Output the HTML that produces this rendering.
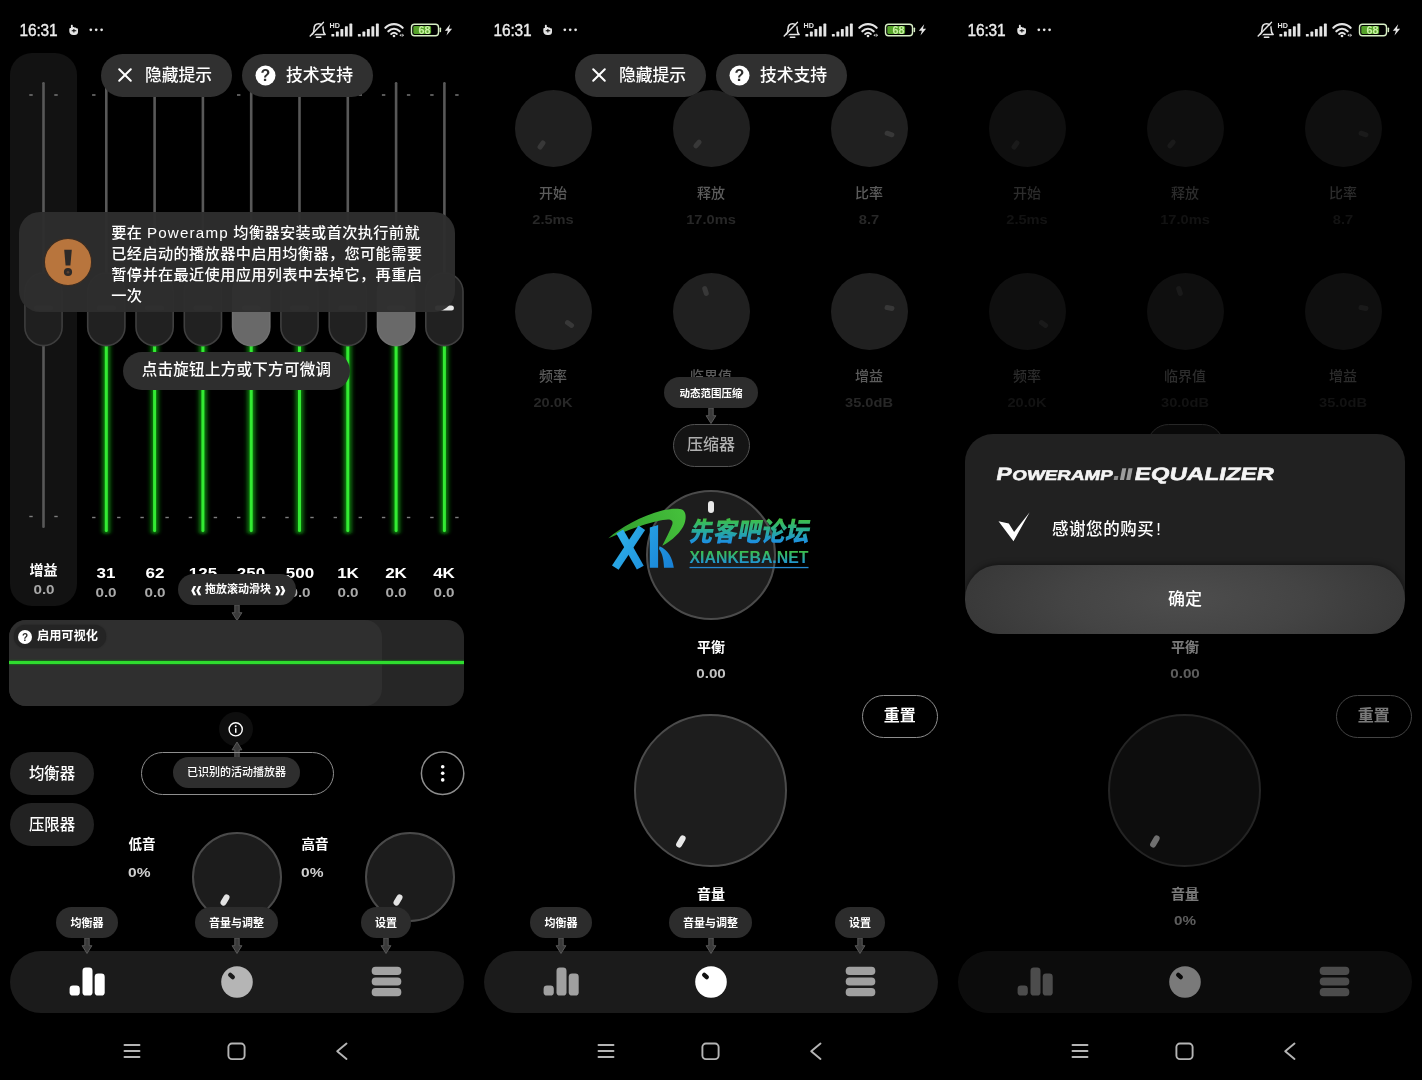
<!DOCTYPE html>
<html lang="zh-CN">
<head>
<meta charset="utf-8">
<title>Poweramp Equalizer</title>
<style>
*{box-sizing:border-box;margin:0;padding:0}
html,body{width:1422px;height:1080px;background:#000;overflow:hidden}
body{font-family:"Liberation Sans","Noto Sans CJK SC",sans-serif;color:#fff;position:relative}
.ph{position:absolute;top:0;width:474px;height:1080px;overflow:hidden;background:#000;opacity:.999}
#p1{left:0}#p2{left:474px}#p3{left:948px}
.abs{position:absolute}
.ctr{position:absolute;transform:translateX(-50%);white-space:nowrap;text-align:center}
.ctr.w{transform:translateX(-50%) scaleX(1.17)}
.wl{transform:scaleX(1.15);transform-origin:0 50%}
/* status bar */
.time{position:absolute;left:19.500px;top:22px;-webkit-text-stroke:.35px #ededed;font-size:15.500px;line-height:18px;color:#ededed;letter-spacing:-.15px;transform:scaleY(1.06);transform-origin:0 50%}
.sb svg{position:absolute;left:0;top:0}
/* pills */
.pill{position:absolute;background:#303030;border-radius:22px;white-space:nowrap;color:#fff;font-weight:500}
.hint{height:43px;top:54px;width:131px;font-size:16.800px;line-height:43px}
.tip{position:absolute;background:#2c2c2c;border-radius:16px;height:30px;line-height:29px;font-size:11px;font-weight:700;text-align:center;color:#fff;white-space:nowrap}
.arrow{position:absolute;width:10px;height:15px}
/* bottom nav */
.bnav{position:absolute;left:10px;top:951px;width:454px;height:62px;border-radius:31px;background:#1b1b1b}
.sys{position:absolute;left:0;top:1036px;width:474px;height:30px}
/* knob */
.knob{position:absolute;border-radius:50%;background:#1b1b1b;border:2px solid #454545}
.lbl{font-weight:500}
.val{color:#a9a9a9;font-weight:700}
</style>
</head>
<body>
<!-- ======================= PANEL 1 ======================= -->
<div class="ph" id="p1">

<div class="sb">
<div class="time">16:31</div>
<svg width="474" height="50" viewBox="0 0 474 50">
<g fill="#e4e4e4">
<!-- hand icon -->
<path d="M69.3 29.2c0-1 .9-1.5 1.6-1.1v-2.3c0-1.300 1.900-1.300 1.900 0v1.500c.5-.7 1.700-.5 1.800.4c.6-.5 1.600-.2 1.700.6c.8-.3 1.700.2 1.700 1.100v2.600c0 1.800-1.300 3-3.200 3h-1.600c-2.100 0-3.900-1.600-3.900-3.700z"/>
<circle cx="90.800" cy="29.800" r="1.350"/><circle cx="96.200" cy="29.800" r="1.350"/><circle cx="101.600" cy="29.800" r="1.350"/>
</g>
<g fill="#000"><rect x="71.600" y="30.300" width="4.800" height="1" rx=".4"/><rect x="73.400" y="29" width="1" height="3.600" rx=".4"/></g>
<!-- mute bell -->
<g fill="none" stroke="#e4e4e4" stroke-width="1.500" stroke-linecap="round" stroke-linejoin="round">
<path d="M312 34.500h13.200c-1.700-1.400-2-2.700-2-5.300c0-3.400-1.700-5.500-4.600-5.500c-2.900 0-4.600 2.100-4.600 5.500c0 2.600-.3 3.900-2 5.300z"/>
<path d="M316.400 37.300h4.400"/>
<path d="M323.400 22.400L310.200 36" stroke-width="1.500"/>
</g>
<path d="M324.600 23.500L311.400 37.100" stroke="#000" stroke-width="1.300" fill="none"/>
<!-- signal -->
<g fill="#e4e4e4"><rect x="331.4" y="34.0" width="2.9" height="2.6" rx="0.6"/><rect x="335.9" y="31.6" width="2.9" height="5.0" rx="0.6"/><rect x="340.4" y="29.0" width="2.9" height="7.6" rx="0.6"/><rect x="344.9" y="26.3" width="2.9" height="10.3" rx="0.6"/><rect x="349.4" y="23.6" width="2.9" height="13.0" rx="0.6"/><rect x="357.9" y="34.0" width="2.9" height="2.6" rx="0.6"/><rect x="362.4" y="31.6" width="2.9" height="5.0" rx="0.6"/><rect x="366.9" y="29.0" width="2.9" height="7.6" rx="0.6"/><rect x="371.4" y="26.3" width="2.9" height="10.3" rx="0.6"/><rect x="375.9" y="23.6" width="2.9" height="13.0" rx="0.6"/></g>
<text x="329.600" y="28.300" font-family="Liberation Sans, sans-serif" font-size="6.400" font-weight="700" fill="#e4e4e4" textLength="10.400" lengthAdjust="spacingAndGlyphs">HD</text>
<!-- wifi -->
<g fill="none" stroke="#e4e4e4" stroke-width="2.250" stroke-linecap="round">
<path d="M385.400 27.800c5-4.800 12.200-4.800 17.200 0"/>
<path d="M388.400 31.200c3.300-3.100 7.900-3.100 11.200 0"/>
<path d="M391.200 34c1.700-1.500 3.900-1.500 5.600 0" stroke-width="1.900"/>
</g>
<circle cx="394" cy="36" r="1.300" fill="#e4e4e4"/>
<path d="M399.400 35.200l2-1.500v3zM402.300 37v-3.500l1.800 1.700z" fill="#cfcfcf"/>
<!-- battery -->
<rect x="411.500" y="24.300" width="27" height="11.400" rx="3" fill="none" stroke="#d8efc6" stroke-width="1.400"/>
<rect x="413.300" y="26.100" width="17.800" height="7.800" rx="1.400" fill="#55a22a"/>
<rect x="439.600" y="27.600" width="1.500" height="4.600" rx=".7" fill="#d8efc6"/>
<text x="418.600" y="33.900" font-family="Liberation Sans, sans-serif" font-size="10.400" font-weight="700" fill="#c9f3a3" textLength="12" lengthAdjust="spacingAndGlyphs">68</text>
<path d="M450.200 24.200l-5.400 6.600h3.100l-1.400 4.700l5.600-6.800h-3.200z" fill="#e4e4e4"/>
</svg>
</div><div class="abs" style="left:10px;top:53px;width:67px;height:553px;border-radius:22px;background:#121212"></div><svg class="abs" style="left:0;top:0" width="474" height="620" viewBox="0 0 474 620"><defs><filter id="glow" x="-400%" y="-5%" width="900%" height="110%"><feGaussianBlur stdDeviation="2.600 1.500"/></filter></defs><g fill="#7e7e7e"><rect x="29.3" y="94.3" width="3.400" height="1.400"/><rect x="54.3" y="94.3" width="3.400" height="1.400"/><rect x="29.3" y="515.8" width="3.400" height="1.400"/><rect x="54.3" y="515.8" width="3.400" height="1.400"/><rect x="92.1" y="94.3" width="3.400" height="1.400"/><rect x="117.1" y="94.3" width="3.400" height="1.400"/><rect x="92.1" y="516.8" width="3.400" height="1.400"/><rect x="117.1" y="516.8" width="3.400" height="1.400"/><rect x="140.4" y="94.3" width="3.400" height="1.400"/><rect x="165.4" y="94.3" width="3.400" height="1.400"/><rect x="140.4" y="516.8" width="3.400" height="1.400"/><rect x="165.4" y="516.8" width="3.400" height="1.400"/><rect x="188.7" y="94.3" width="3.400" height="1.400"/><rect x="213.7" y="94.3" width="3.400" height="1.400"/><rect x="188.7" y="516.8" width="3.400" height="1.400"/><rect x="213.7" y="516.8" width="3.400" height="1.400"/><rect x="237.0" y="94.3" width="3.400" height="1.400"/><rect x="262.0" y="94.3" width="3.400" height="1.400"/><rect x="237.0" y="516.8" width="3.400" height="1.400"/><rect x="262.0" y="516.8" width="3.400" height="1.400"/><rect x="285.3" y="94.3" width="3.400" height="1.400"/><rect x="310.3" y="94.3" width="3.400" height="1.400"/><rect x="285.3" y="516.8" width="3.400" height="1.400"/><rect x="310.3" y="516.8" width="3.400" height="1.400"/><rect x="333.6" y="94.3" width="3.400" height="1.400"/><rect x="358.6" y="94.3" width="3.400" height="1.400"/><rect x="333.6" y="516.8" width="3.400" height="1.400"/><rect x="358.6" y="516.8" width="3.400" height="1.400"/><rect x="381.9" y="94.3" width="3.400" height="1.400"/><rect x="406.9" y="94.3" width="3.400" height="1.400"/><rect x="381.9" y="516.8" width="3.400" height="1.400"/><rect x="406.9" y="516.8" width="3.400" height="1.400"/><rect x="430.2" y="94.3" width="3.400" height="1.400"/><rect x="455.2" y="94.3" width="3.400" height="1.400"/><rect x="430.2" y="516.8" width="3.400" height="1.400"/><rect x="455.2" y="516.8" width="3.400" height="1.400"/></g><rect x="42.200" y="82" width="2.600" height="446" rx="1.300" fill="#585858"/><rect x="105.0" y="82" width="2.600" height="200" rx="1.300" fill="#585858"/><rect x="153.3" y="82" width="2.600" height="200" rx="1.300" fill="#585858"/><rect x="201.6" y="82" width="2.600" height="200" rx="1.300" fill="#585858"/><rect x="249.9" y="82" width="2.600" height="200" rx="1.300" fill="#585858"/><rect x="298.2" y="82" width="2.600" height="200" rx="1.300" fill="#585858"/><rect x="346.5" y="82" width="2.600" height="200" rx="1.300" fill="#585858"/><rect x="394.8" y="82" width="2.600" height="200" rx="1.300" fill="#585858"/><rect x="443.1" y="82" width="2.600" height="200" rx="1.300" fill="#585858"/><rect x="103.1" y="343" width="6.400" height="191" rx="3" fill="#19b519" opacity=".85" filter="url(#glow)"/><rect x="104.8" y="344" width="3" height="188" rx="1.500" fill="#33ea33"/><rect x="151.4" y="343" width="6.400" height="191" rx="3" fill="#19b519" opacity=".85" filter="url(#glow)"/><rect x="153.1" y="344" width="3" height="188" rx="1.500" fill="#33ea33"/><rect x="199.7" y="343" width="6.400" height="191" rx="3" fill="#19b519" opacity=".85" filter="url(#glow)"/><rect x="201.4" y="344" width="3" height="188" rx="1.500" fill="#33ea33"/><rect x="248.0" y="343" width="6.400" height="191" rx="3" fill="#19b519" opacity=".85" filter="url(#glow)"/><rect x="249.7" y="344" width="3" height="188" rx="1.500" fill="#33ea33"/><rect x="296.3" y="343" width="6.400" height="191" rx="3" fill="#19b519" opacity=".85" filter="url(#glow)"/><rect x="298.0" y="344" width="3" height="188" rx="1.500" fill="#33ea33"/><rect x="344.6" y="343" width="6.400" height="191" rx="3" fill="#19b519" opacity=".85" filter="url(#glow)"/><rect x="346.3" y="344" width="3" height="188" rx="1.500" fill="#33ea33"/><rect x="392.9" y="343" width="6.400" height="191" rx="3" fill="#19b519" opacity=".85" filter="url(#glow)"/><rect x="394.6" y="344" width="3" height="188" rx="1.500" fill="#33ea33"/><rect x="441.2" y="343" width="6.400" height="191" rx="3" fill="#19b519" opacity=".85" filter="url(#glow)"/><rect x="442.9" y="344" width="3" height="188" rx="1.500" fill="#33ea33"/><rect x="24.9" y="273" width="37.200" height="72.600" rx="18.600" fill="#1f1f1f" stroke="#3d3d3d" stroke-width="1.600"/><rect x="34.0" y="305.500" width="19" height="5" rx="2.500" fill="#606060"/><rect x="87.7" y="273" width="37.200" height="72.600" rx="18.600" fill="#212121" stroke="#3f3f3f" stroke-width="1.600"/><rect x="96.8" y="305.500" width="19" height="5" rx="2.500" fill="#606060"/><rect x="136.0" y="273" width="37.200" height="72.600" rx="18.600" fill="#212121" stroke="#3f3f3f" stroke-width="1.600"/><rect x="145.1" y="305.500" width="19" height="5" rx="2.500" fill="#606060"/><rect x="184.3" y="273" width="37.200" height="72.600" rx="18.600" fill="#212121" stroke="#3f3f3f" stroke-width="1.600"/><rect x="193.4" y="305.500" width="19" height="5" rx="2.500" fill="#606060"/><rect x="232.6" y="273" width="37.200" height="72.600" rx="18.600" fill="#696969" stroke="#6f6f6f" stroke-width="1.600"/><rect x="241.7" y="305.500" width="19" height="5" rx="2.500" fill="#9a9a9a"/><rect x="280.9" y="273" width="37.200" height="72.600" rx="18.600" fill="#212121" stroke="#3f3f3f" stroke-width="1.600"/><rect x="290.0" y="305.500" width="19" height="5" rx="2.500" fill="#606060"/><rect x="329.2" y="273" width="37.200" height="72.600" rx="18.600" fill="#212121" stroke="#3f3f3f" stroke-width="1.600"/><rect x="338.3" y="305.500" width="19" height="5" rx="2.500" fill="#606060"/><rect x="377.5" y="273" width="37.200" height="72.600" rx="18.600" fill="#696969" stroke="#6f6f6f" stroke-width="1.600"/><rect x="386.6" y="305.500" width="19" height="5" rx="2.500" fill="#9a9a9a"/><rect x="425.8" y="273" width="37.200" height="72.600" rx="18.600" fill="#212121" stroke="#3f3f3f" stroke-width="1.600"/><rect x="434.9" y="305.500" width="19" height="5" rx="2.500" fill="#e9e9e9"/></svg><div class="ctr lbl" style="left:43.500px;top:559.500px;font-size:14px;line-height:20px;font-weight:700">增益</div><div class="ctr val w" style="left:43.500px;top:581px;font-size:13px;line-height:18px">0.0</div><div class="ctr w" style="left:106.3px;top:563px;font-size:14.500px;line-height:20px;font-weight:700">31</div><div class="ctr val w" style="left:106.3px;top:584px;font-size:13px;line-height:18px">0.0</div><div class="ctr w" style="left:154.6px;top:563px;font-size:14.500px;line-height:20px;font-weight:700">62</div><div class="ctr val w" style="left:154.6px;top:584px;font-size:13px;line-height:18px">0.0</div><div class="ctr w" style="left:202.9px;top:563px;font-size:14.500px;line-height:20px;font-weight:700">125</div><div class="ctr val w" style="left:202.9px;top:584px;font-size:13px;line-height:18px">0.0</div><div class="ctr w" style="left:251.2px;top:563px;font-size:14.500px;line-height:20px;font-weight:700">250</div><div class="ctr val w" style="left:251.2px;top:584px;font-size:13px;line-height:18px">0.0</div><div class="ctr w" style="left:299.5px;top:563px;font-size:14.500px;line-height:20px;font-weight:700">500</div><div class="ctr val w" style="left:299.5px;top:584px;font-size:13px;line-height:18px">0.0</div><div class="ctr w" style="left:347.8px;top:563px;font-size:14.500px;line-height:20px;font-weight:700">1K</div><div class="ctr val w" style="left:347.8px;top:584px;font-size:13px;line-height:18px">0.0</div><div class="ctr w" style="left:396.1px;top:563px;font-size:14.500px;line-height:20px;font-weight:700">2K</div><div class="ctr val w" style="left:396.1px;top:584px;font-size:13px;line-height:18px">0.0</div><div class="ctr w" style="left:444.4px;top:563px;font-size:14.500px;line-height:20px;font-weight:700">4K</div><div class="ctr val w" style="left:444.4px;top:584px;font-size:13px;line-height:18px">0.0</div>
<div class="pill hint" style="left:101px"><svg class="abs" style="left:16px;top:13px" width="16" height="16" viewBox="0 0 16 16"><path d="M2.200 2.200L13.800 13.800M13.800 2.200L2.200 13.800" stroke="#fff" stroke-width="2" stroke-linecap="round"/></svg><span class="abs" style="left:44px;top:0">隐藏提示</span></div>
<div class="pill hint" style="left:242px"><svg class="abs" style="left:13px;top:11px" width="21" height="21" viewBox="0 0 21 21"><circle cx="10.500" cy="10.500" r="10" fill="#fff"/><text x="10.500" y="16.200" text-anchor="middle" font-family="Liberation Sans, sans-serif" font-weight="700" font-size="16" fill="#2d2d2d">?</text></svg><span class="abs" style="left:44px;top:0">技术支持</span></div><div class="abs" style="left:19px;top:212px;width:436px;height:100px;border-radius:21px;background:rgba(46,46,46,.965)">
<svg class="abs" style="left:23.600px;top:24.600px" width="50" height="50" viewBox="0 0 50 50"><circle cx="25" cy="25" r="23.600" fill="#b8753d" stroke="#3a2c22" stroke-width="1.200"/><path d="M21.200 12.800h7.600l-1.400 15.600h-4.800z" fill="#2e2a28"/><circle cx="25" cy="35" r="4.100" fill="#2e2a28"/><circle cx="25" cy="35.200" r="1.300" fill="#5a4030"/></svg>
<div class="abs" style="left:92.300px;top:9.700px;width:335px;font-size:15.200px;line-height:21px;font-weight:500;color:#fff;letter-spacing:.36px">要在 <span style="letter-spacing:1.150px">Poweramp</span> 均衡器安装或首次执行前就<br>已经启动的播放器中启用均衡器，您可能需要<br>暂停并在最近使用应用列表中去掉它，再重启<br>一次</div>
</div><div class="pill" style="left:123px;top:352px;width:227px;height:38px;border-radius:19px;font-size:15.500px;line-height:36px;text-align:center;letter-spacing:.3px;background:#2e2e2e">点击旋钮上方或下方可微调</div><div class="tip" style="left:178px;top:574px;width:118px;height:31px;line-height:31.500px;font-size:11px;border-radius:16px"><span style="letter-spacing:-2.500px;font-size:9px;margin-right:4.500px">❰❰</span>拖放滚动滑块<span style="letter-spacing:-2.500px;font-size:9px;margin-left:2.500px">❱❱</span></div><svg class="abs" style="left:230.7px;top:604.5px" width="12" height="16.5" viewBox="0 0 12 16.5"><path d="M3.800 0h4.400v7.7h2.700L6 15.5L1.100 7.7h2.700z" fill="#3a3a3a" stroke="#5e5e5e" stroke-width=".9" stroke-linejoin="round"/></svg><div class="abs" style="left:9px;top:620px;width:455px;height:86px;border-radius:17px;background:#262626;overflow:hidden"><div class="abs" style="left:0;top:0;width:373px;height:86px;border-radius:0 17px 17px 0;background:#2f2f2f"></div><div class="abs" style="left:0;top:40.700px;width:455px;height:3.400px;background:#2fdc2f;box-shadow:0 0 1.500px 0.500px #157a15"></div></div><div class="pill" style="left:14px;top:625px;width:92px;height:23px;border-radius:12px;font-size:12.200px;line-height:22.500px;font-weight:700;background:#242424;box-shadow:0 0 2px rgba(0,0,0,.35)"><svg class="abs" style="left:4px;top:4.500px" width="14" height="14" viewBox="0 0 14 14"><circle cx="7" cy="7" r="7" fill="#fff"/><text x="7" y="10.600" text-anchor="middle" font-family="Liberation Sans, sans-serif" font-weight="700" font-size="10" fill="#2a2a2a">?</text></svg><span class="abs" style="left:23px;top:0">启用可视化</span></div><svg class="abs" style="left:218px;top:711px" width="36" height="36" viewBox="0 0 36 36"><circle cx="18" cy="18" r="17" fill="#0e0e0e"/><circle cx="17.700" cy="18.300" r="6.600" fill="none" stroke="#fff" stroke-width="1.400"/><rect x="17" y="17.300" width="1.500" height="4.500" fill="#fff"/><circle cx="17.700" cy="15.300" r=".95" fill="#fff"/></svg><svg class="abs" style="left:230.7px;top:741px" width="12" height="16.5" viewBox="0 -1 12 16.5"><path d="M3.800 15.5h4.400v-7.7h2.700L6 0L1.100 7.8h2.700z" fill="#3a3a3a" stroke="#5e5e5e" stroke-width=".9" stroke-linejoin="round"/></svg><div class="pill" style="left:10px;top:752px;width:84px;height:43px;font-size:15.400px;line-height:43px;text-align:center;background:#222;font-weight:500">均衡器</div><div class="pill" style="left:10px;top:803px;width:84px;height:43px;font-size:15.400px;line-height:43px;text-align:center;background:#222;font-weight:500">压限器</div><div class="abs" style="left:140.500px;top:752px;width:193px;height:43px;border-radius:22px;border:1.500px solid #8e8e8e"></div><div class="tip" style="left:173px;top:757px;width:127px;height:31px;line-height:31.500px;font-size:11px;border-radius:16px;background:#2e2e2e;font-weight:500">已识别的活动播放器</div><svg class="abs" style="left:420px;top:751px" width="46" height="46" viewBox="0 0 46 46"><circle cx="22.600" cy="22.300" r="21.200" fill="none" stroke="#8e8e8e" stroke-width="1.500"/><g fill="#fff"><circle cx="22.700" cy="15.700" r="1.800"/><circle cx="22.700" cy="22.300" r="1.800"/><circle cx="22.700" cy="28.900" r="1.800"/></g></svg><div class="abs lbl" style="left:128.500px;top:835.300px;font-size:13.500px;line-height:20px;font-weight:700">低音</div><div class="abs val wl" style="left:128px;top:863px;font-size:13.500px;line-height:20px;color:#cfcfcf">0%</div><div class="abs lbl" style="left:301.500px;top:835.300px;font-size:13.500px;line-height:20px;font-weight:700">高音</div><div class="abs val wl" style="left:301px;top:863px;font-size:13.500px;line-height:20px;color:#cfcfcf">0%</div><div class="knob" style="left:192px;top:832px;width:90px;height:90px;background:#1c1c1c;border-color:#4a4a4a"></div><div class="abs" style="left:221.5px;top:893.5px;width:6px;height:12px;border-radius:3px;background:#e2e2e2;transform:rotate(30deg)"></div><div class="knob" style="left:365px;top:832px;width:90px;height:90px;background:#1c1c1c;border-color:#4a4a4a"></div><div class="abs" style="left:394.5px;top:893.5px;width:6px;height:12px;border-radius:3px;background:#e2e2e2;transform:rotate(30deg)"></div>
<div class="bnav" style="background:#1b1b1b">
<svg width="454" height="62" viewBox="10 951 454 62" style="position:absolute;left:0;top:0">
<g fill="#ffffff">
<rect x="69.600" y="985.400" width="10.200" height="10.200" rx="3.400"/>
<rect x="82.500" y="967.500" width="10" height="28.100" rx="3.400"/>
<rect x="94.700" y="973.500" width="10" height="22.100" rx="3.400"/>
</g>
<circle cx="237" cy="982" r="15.800" fill="#b5b5b5"/>
<rect x="-3.900" y="-2.200" width="7.800" height="4.400" rx="2.200" fill="#1b1b1b" transform="translate(231.500 976) rotate(42)"/>
<g fill="#a3a3a3">
<rect x="371.700" y="966.800" width="29.600" height="8.200" rx="3.800"/>
<rect x="371.700" y="977.400" width="29.600" height="8.200" rx="3.800"/>
<rect x="371.700" y="988" width="29.600" height="8.200" rx="3.800"/>
</g>
</svg>
</div><div class="tip" style="left:56.0px;top:907px;width:62px;height:31px;line-height:33px;font-size:11px">均衡器</div><svg class="abs" style="left:81px;top:938px" width="12" height="16.5" viewBox="0 0 12 16.5"><path d="M3.800 0h4.400v7.7h2.700L6 15.5L1.100 7.7h2.700z" fill="#3a3a3a" stroke="#5e5e5e" stroke-width=".9" stroke-linejoin="round"/></svg><div class="tip" style="left:195.0px;top:907px;width:83px;height:31px;line-height:33px;font-size:11px">音量与调整</div><svg class="abs" style="left:230.7px;top:938px" width="12" height="16.5" viewBox="0 0 12 16.5"><path d="M3.800 0h4.400v7.7h2.700L6 15.5L1.100 7.7h2.700z" fill="#3a3a3a" stroke="#5e5e5e" stroke-width=".9" stroke-linejoin="round"/></svg><div class="tip" style="left:361.0px;top:907px;width:50px;height:31px;line-height:33px;font-size:11px">设置</div><svg class="abs" style="left:380px;top:938px" width="12" height="16.5" viewBox="0 0 12 16.5"><path d="M3.800 0h4.400v7.7h2.700L6 15.5L1.100 7.7h2.700z" fill="#3a3a3a" stroke="#5e5e5e" stroke-width=".9" stroke-linejoin="round"/></svg>
<svg class="sys" viewBox="0 0 474 30" width="474" height="30">
<g fill="none" stroke="#b4b4b4" stroke-width="1.900" stroke-linecap="round" stroke-linejoin="round">
<path d="M124.500 9h15M124.500 15h15M124.500 21h15"/>
<rect x="228.400" y="7.500" width="16.200" height="15.600" rx="3.600"/>
<path d="M346.500 7.500L337.200 15.200L346.500 23"/>
</g></svg>
</div>
<!-- ======================= PANEL 2 ======================= -->
<div class="ph" id="p2">

<div class="sb">
<div class="time">16:31</div>
<svg width="474" height="50" viewBox="0 0 474 50">
<g fill="#e4e4e4">
<!-- hand icon -->
<path d="M69.3 29.2c0-1 .9-1.5 1.6-1.1v-2.3c0-1.300 1.900-1.300 1.900 0v1.500c.5-.7 1.700-.5 1.800.4c.6-.5 1.600-.2 1.700.6c.8-.3 1.700.2 1.700 1.100v2.600c0 1.800-1.300 3-3.200 3h-1.600c-2.100 0-3.900-1.600-3.900-3.700z"/>
<circle cx="90.800" cy="29.800" r="1.350"/><circle cx="96.200" cy="29.800" r="1.350"/><circle cx="101.600" cy="29.800" r="1.350"/>
</g>
<g fill="#000"><rect x="71.600" y="30.300" width="4.800" height="1" rx=".4"/><rect x="73.400" y="29" width="1" height="3.600" rx=".4"/></g>
<!-- mute bell -->
<g fill="none" stroke="#e4e4e4" stroke-width="1.500" stroke-linecap="round" stroke-linejoin="round">
<path d="M312 34.500h13.200c-1.700-1.400-2-2.700-2-5.300c0-3.400-1.700-5.500-4.600-5.500c-2.900 0-4.600 2.100-4.600 5.500c0 2.600-.3 3.900-2 5.300z"/>
<path d="M316.400 37.300h4.400"/>
<path d="M323.400 22.400L310.200 36" stroke-width="1.500"/>
</g>
<path d="M324.600 23.500L311.400 37.100" stroke="#000" stroke-width="1.300" fill="none"/>
<!-- signal -->
<g fill="#e4e4e4"><rect x="331.4" y="34.0" width="2.9" height="2.6" rx="0.6"/><rect x="335.9" y="31.6" width="2.9" height="5.0" rx="0.6"/><rect x="340.4" y="29.0" width="2.9" height="7.6" rx="0.6"/><rect x="344.9" y="26.3" width="2.9" height="10.3" rx="0.6"/><rect x="349.4" y="23.6" width="2.9" height="13.0" rx="0.6"/><rect x="357.9" y="34.0" width="2.9" height="2.6" rx="0.6"/><rect x="362.4" y="31.6" width="2.9" height="5.0" rx="0.6"/><rect x="366.9" y="29.0" width="2.9" height="7.6" rx="0.6"/><rect x="371.4" y="26.3" width="2.9" height="10.3" rx="0.6"/><rect x="375.9" y="23.6" width="2.9" height="13.0" rx="0.6"/></g>
<text x="329.600" y="28.300" font-family="Liberation Sans, sans-serif" font-size="6.400" font-weight="700" fill="#e4e4e4" textLength="10.400" lengthAdjust="spacingAndGlyphs">HD</text>
<!-- wifi -->
<g fill="none" stroke="#e4e4e4" stroke-width="2.250" stroke-linecap="round">
<path d="M385.400 27.800c5-4.800 12.200-4.800 17.200 0"/>
<path d="M388.400 31.200c3.300-3.100 7.900-3.100 11.200 0"/>
<path d="M391.200 34c1.700-1.500 3.900-1.500 5.600 0" stroke-width="1.900"/>
</g>
<circle cx="394" cy="36" r="1.300" fill="#e4e4e4"/>
<path d="M399.400 35.200l2-1.500v3zM402.300 37v-3.500l1.800 1.700z" fill="#cfcfcf"/>
<!-- battery -->
<rect x="411.500" y="24.300" width="27" height="11.400" rx="3" fill="none" stroke="#d8efc6" stroke-width="1.400"/>
<rect x="413.300" y="26.100" width="17.800" height="7.800" rx="1.400" fill="#55a22a"/>
<rect x="439.600" y="27.600" width="1.500" height="4.600" rx=".7" fill="#d8efc6"/>
<text x="418.600" y="33.900" font-family="Liberation Sans, sans-serif" font-size="10.400" font-weight="700" fill="#c9f3a3" textLength="12" lengthAdjust="spacingAndGlyphs">68</text>
<path d="M450.200 24.200l-5.400 6.600h3.100l-1.400 4.700l5.600-6.800h-3.200z" fill="#e4e4e4"/>
</svg>
</div><div class="abs" style="left:40.5px;top:89.5px;width:77px;height:77px;border-radius:50%;background:#202020"></div><div class="abs" style="left:65.2px;top:140px;width:5px;height:10px;border-radius:2.500px;background:#383838;transform:rotate(35deg)"></div><div class="ctr" style="left:79px;top:183px;font-size:14px;line-height:20px;font-weight:500;color:#5c5c5c">开始</div><div class="ctr w" style="left:79px;top:211px;font-size:12.500px;line-height:18px;font-weight:700;color:#272727">2.5ms</div><div class="abs" style="left:198.5px;top:89.5px;width:77px;height:77px;border-radius:50%;background:#202020"></div><div class="abs" style="left:220.5px;top:139px;width:5px;height:10px;border-radius:2.500px;background:#383838;transform:rotate(40deg)"></div><div class="ctr" style="left:237px;top:183px;font-size:14px;line-height:20px;font-weight:500;color:#5c5c5c">释放</div><div class="ctr w" style="left:237px;top:211px;font-size:12.500px;line-height:18px;font-weight:700;color:#272727">17.0ms</div><div class="abs" style="left:356.5px;top:89.5px;width:77px;height:77px;border-radius:50%;background:#202020"></div><div class="abs" style="left:412.5px;top:129px;width:5px;height:10px;border-radius:2.500px;background:#383838;transform:rotate(-72deg)"></div><div class="ctr" style="left:395px;top:183px;font-size:14px;line-height:20px;font-weight:500;color:#5c5c5c">比率</div><div class="ctr w" style="left:395px;top:211px;font-size:12.500px;line-height:18px;font-weight:700;color:#272727">8.7</div><div class="abs" style="left:40.5px;top:272.5px;width:77px;height:77px;border-radius:50%;background:#202020"></div><div class="abs" style="left:92.5px;top:319px;width:5px;height:10px;border-radius:2.500px;background:#383838;transform:rotate(-55deg)"></div><div class="ctr" style="left:79px;top:366px;font-size:14px;line-height:20px;font-weight:500;color:#5c5c5c">频率</div><div class="ctr w" style="left:79px;top:394px;font-size:12.500px;line-height:18px;font-weight:700;color:#272727">20.0K</div><div class="abs" style="left:198.5px;top:272.5px;width:77px;height:77px;border-radius:50%;background:#202020"></div><div class="abs" style="left:228.5px;top:286px;width:5px;height:10px;border-radius:2.500px;background:#383838;transform:rotate(-18deg)"></div><div class="ctr" style="left:237px;top:366px;font-size:14px;line-height:20px;font-weight:500;color:#5c5c5c">临界值</div><div class="ctr w" style="left:237px;top:394px;font-size:12.500px;line-height:18px;font-weight:700;color:#272727">30.0dB</div><div class="abs" style="left:356.5px;top:272.5px;width:77px;height:77px;border-radius:50%;background:#202020"></div><div class="abs" style="left:412.5px;top:303px;width:5px;height:10px;border-radius:2.500px;background:#383838;transform:rotate(-80deg)"></div><div class="ctr" style="left:395px;top:366px;font-size:14px;line-height:20px;font-weight:500;color:#5c5c5c">增益</div><div class="ctr w" style="left:395px;top:394px;font-size:12.500px;line-height:18px;font-weight:700;color:#272727">35.0dB</div><div class="abs" style="left:198.500px;top:424px;width:77px;height:43px;border-radius:22px;border:1.500px solid #525252;background:#141414;color:#b0b0b0;font-size:16px;line-height:39px;text-align:center;font-weight:500">压缩器</div><div class="knob" style="left:172px;top:489.500px;width:130px;height:130px;background:#1d1d1d;border-color:#4b4b4b"></div><div class="abs" style="left:234px;top:500.500px;width:6px;height:12.500px;border-radius:3px;background:#e8e8e8"></div><div class="ctr" style="left:237px;top:637px;font-size:14px;line-height:20px;font-weight:700">平衡</div><div class="ctr w" style="left:237px;top:665px;font-size:13px;line-height:18px;font-weight:700;color:#c2c2c2">0.00</div><div class="abs" style="left:387.500px;top:695px;width:76.500px;height:42.500px;border-radius:22px;border:1.500px solid #8e8e8e;font-size:16px;line-height:39px;text-align:center;font-weight:700">重置</div><div class="knob" style="left:159.800px;top:713.800px;width:153px;height:153px;background:#1d1d1d;border-color:#4b4b4b"></div><div class="abs" style="left:204px;top:835px;width:6px;height:12.500px;border-radius:3px;background:#e8e8e8;transform:rotate(30deg)"></div><div class="ctr" style="left:237px;top:884px;font-size:14px;line-height:20px;font-weight:700">音量</div>
<div class="bnav" style="background:#1b1b1b">
<svg width="454" height="62" viewBox="10 951 454 62" style="position:absolute;left:0;top:0">
<g fill="#a0a0a0">
<rect x="69.600" y="985.400" width="10.200" height="10.200" rx="3.400"/>
<rect x="82.500" y="967.500" width="10" height="28.100" rx="3.400"/>
<rect x="94.700" y="973.500" width="10" height="22.100" rx="3.400"/>
</g>
<circle cx="237" cy="982" r="15.800" fill="#ffffff"/>
<rect x="-3.900" y="-2.200" width="7.800" height="4.400" rx="2.200" fill="#111" transform="translate(231.500 976) rotate(42)"/>
<g fill="#a0a0a0">
<rect x="371.700" y="966.800" width="29.600" height="8.200" rx="3.800"/>
<rect x="371.700" y="977.400" width="29.600" height="8.200" rx="3.800"/>
<rect x="371.700" y="988" width="29.600" height="8.200" rx="3.800"/>
</g>
</svg>
</div>
<div class="pill hint" style="left:101px"><svg class="abs" style="left:16px;top:13px" width="16" height="16" viewBox="0 0 16 16"><path d="M2.200 2.200L13.800 13.800M13.800 2.200L2.200 13.800" stroke="#fff" stroke-width="2" stroke-linecap="round"/></svg><span class="abs" style="left:44px;top:0">隐藏提示</span></div>
<div class="pill hint" style="left:242px"><svg class="abs" style="left:13px;top:11px" width="21" height="21" viewBox="0 0 21 21"><circle cx="10.500" cy="10.500" r="10" fill="#fff"/><text x="10.500" y="16.200" text-anchor="middle" font-family="Liberation Sans, sans-serif" font-weight="700" font-size="16" fill="#2d2d2d">?</text></svg><span class="abs" style="left:44px;top:0">技术支持</span></div><div class="tip" style="left:190.0px;top:377px;width:94px;height:31px;line-height:33px;font-size:10.5px">动态范围压缩</div><svg class="abs" style="left:231px;top:408px" width="12" height="16.5" viewBox="0 0 12 16.5"><path d="M3.800 0h4.400v7.7h2.700L6 15.5L1.100 7.7h2.700z" fill="#3a3a3a" stroke="#5e5e5e" stroke-width=".9" stroke-linejoin="round"/></svg>
<svg class="abs" style="left:130px;top:500px" width="214" height="76" viewBox="130 500 214 76">
<defs>
<linearGradient id="wg1" gradientUnits="userSpaceOnUse" x1="0" y1="-24" x2="0" y2="2"><stop offset="0" stop-color="#43c136"/><stop offset=".45" stop-color="#2bb08c"/><stop offset="1" stop-color="#1b8de6"/></linearGradient>
<linearGradient id="wg2" gradientUnits="userSpaceOnUse" x1="0" y1="551" x2="0" y2="564"><stop offset="0" stop-color="#3fbf45"/><stop offset=".55" stop-color="#2aa99a"/><stop offset="1" stop-color="#1f8fe0"/></linearGradient>
<linearGradient id="wg3" gradientUnits="userSpaceOnUse" x1="140" y1="528" x2="200" y2="568"><stop offset="0" stop-color="#2fb4ea"/><stop offset="1" stop-color="#1780d6"/></linearGradient>
<linearGradient id="wg4" gradientUnits="userSpaceOnUse" x1="135" y1="538" x2="211" y2="510"><stop offset="0" stop-color="#2f9a2c"/><stop offset="1" stop-color="#46c23c"/></linearGradient>
</defs>
<!-- swoosh / K bowl -->
<path d="M134.400 538.300C146 528 166 516.500 189 510.300C197 508.500 205 508 208.500 509.800C212 512 212.500 518 210.500 523.500C207.500 532 198 540.500 188.300 545.800C191 540 196 531 198.300 524.500C199.300 521 197.500 519.600 194 519.600C182 520 158 528.500 134.400 538.300Z" fill="url(#wg4)"/>
<!-- X -->
<g stroke="url(#wg3)" stroke-width="7.900" fill="none" stroke-linecap="butt">
<path d="M145.800 531.500L166.300 567.600"/>
<path d="M167.800 527.800L141.300 567.600"/>
</g>
<!-- K stem + leg -->
<path d="M175.800 527.500l8.300-2.500v42.700h-8.300z" fill="url(#wg3)"/>
<path d="M185.500 546.200C194 549.500 198.500 558 199.800 567.700h-9.800C189.800 560 188.500 553.500 185 549z" fill="url(#wg3)"/>
<text x="0" y="0" font-family="Liberation Sans, Noto Sans CJK SC, sans-serif" font-weight="900" font-size="26.500" fill="url(#wg1)" textLength="120" lengthAdjust="spacingAndGlyphs" transform="translate(214.500 541.300) skewX(-11)">先客吧论坛</text>
<text x="215.500" y="563.200" font-family="Liberation Sans, sans-serif" font-weight="700" font-size="16.200" fill="url(#wg2)" textLength="119" lengthAdjust="spacingAndGlyphs">XIANKEBA.NET</text>
<rect x="215.500" y="566.900" width="119" height="1.300" fill="#2589d2"/>
</svg><div class="tip" style="left:56.0px;top:907px;width:62px;height:31px;line-height:33px;font-size:11px">均衡器</div><svg class="abs" style="left:81px;top:938px" width="12" height="16.5" viewBox="0 0 12 16.5"><path d="M3.800 0h4.400v7.7h2.700L6 15.5L1.100 7.7h2.700z" fill="#3a3a3a" stroke="#5e5e5e" stroke-width=".9" stroke-linejoin="round"/></svg><div class="tip" style="left:195.0px;top:907px;width:83px;height:31px;line-height:33px;font-size:11px">音量与调整</div><svg class="abs" style="left:230.7px;top:938px" width="12" height="16.5" viewBox="0 0 12 16.5"><path d="M3.800 0h4.400v7.7h2.700L6 15.5L1.100 7.7h2.700z" fill="#3a3a3a" stroke="#5e5e5e" stroke-width=".9" stroke-linejoin="round"/></svg><div class="tip" style="left:361.0px;top:907px;width:50px;height:31px;line-height:33px;font-size:11px">设置</div><svg class="abs" style="left:380px;top:938px" width="12" height="16.5" viewBox="0 0 12 16.5"><path d="M3.800 0h4.400v7.7h2.700L6 15.5L1.100 7.7h2.700z" fill="#3a3a3a" stroke="#5e5e5e" stroke-width=".9" stroke-linejoin="round"/></svg>
<svg class="sys" viewBox="0 0 474 30" width="474" height="30">
<g fill="none" stroke="#b4b4b4" stroke-width="1.900" stroke-linecap="round" stroke-linejoin="round">
<path d="M124.500 9h15M124.500 15h15M124.500 21h15"/>
<rect x="228.400" y="7.500" width="16.200" height="15.600" rx="3.600"/>
<path d="M346.500 7.500L337.200 15.200L346.500 23"/>
</g></svg>
</div>
<!-- ======================= PANEL 3 ======================= -->
<div class="ph" id="p3">
<div class="abs" style="left:0;top:0;width:474px;height:1080px"><div class="abs" style="left:40.5px;top:89.5px;width:77px;height:77px;border-radius:50%;background:#202020"></div><div class="abs" style="left:65.2px;top:140px;width:5px;height:10px;border-radius:2.500px;background:#383838;transform:rotate(35deg)"></div><div class="ctr" style="left:79px;top:183px;font-size:14px;line-height:20px;font-weight:500;color:#5c5c5c">开始</div><div class="ctr w" style="left:79px;top:211px;font-size:12.500px;line-height:18px;font-weight:700;color:#272727">2.5ms</div><div class="abs" style="left:198.5px;top:89.5px;width:77px;height:77px;border-radius:50%;background:#202020"></div><div class="abs" style="left:220.5px;top:139px;width:5px;height:10px;border-radius:2.500px;background:#383838;transform:rotate(40deg)"></div><div class="ctr" style="left:237px;top:183px;font-size:14px;line-height:20px;font-weight:500;color:#5c5c5c">释放</div><div class="ctr w" style="left:237px;top:211px;font-size:12.500px;line-height:18px;font-weight:700;color:#272727">17.0ms</div><div class="abs" style="left:356.5px;top:89.5px;width:77px;height:77px;border-radius:50%;background:#202020"></div><div class="abs" style="left:412.5px;top:129px;width:5px;height:10px;border-radius:2.500px;background:#383838;transform:rotate(-72deg)"></div><div class="ctr" style="left:395px;top:183px;font-size:14px;line-height:20px;font-weight:500;color:#5c5c5c">比率</div><div class="ctr w" style="left:395px;top:211px;font-size:12.500px;line-height:18px;font-weight:700;color:#272727">8.7</div><div class="abs" style="left:40.5px;top:272.5px;width:77px;height:77px;border-radius:50%;background:#202020"></div><div class="abs" style="left:92.5px;top:319px;width:5px;height:10px;border-radius:2.500px;background:#383838;transform:rotate(-55deg)"></div><div class="ctr" style="left:79px;top:366px;font-size:14px;line-height:20px;font-weight:500;color:#5c5c5c">频率</div><div class="ctr w" style="left:79px;top:394px;font-size:12.500px;line-height:18px;font-weight:700;color:#272727">20.0K</div><div class="abs" style="left:198.5px;top:272.5px;width:77px;height:77px;border-radius:50%;background:#202020"></div><div class="abs" style="left:228.5px;top:286px;width:5px;height:10px;border-radius:2.500px;background:#383838;transform:rotate(-18deg)"></div><div class="ctr" style="left:237px;top:366px;font-size:14px;line-height:20px;font-weight:500;color:#5c5c5c">临界值</div><div class="ctr w" style="left:237px;top:394px;font-size:12.500px;line-height:18px;font-weight:700;color:#272727">30.0dB</div><div class="abs" style="left:356.5px;top:272.5px;width:77px;height:77px;border-radius:50%;background:#202020"></div><div class="abs" style="left:412.5px;top:303px;width:5px;height:10px;border-radius:2.500px;background:#383838;transform:rotate(-80deg)"></div><div class="ctr" style="left:395px;top:366px;font-size:14px;line-height:20px;font-weight:500;color:#5c5c5c">增益</div><div class="ctr w" style="left:395px;top:394px;font-size:12.500px;line-height:18px;font-weight:700;color:#272727">35.0dB</div><div class="abs" style="left:198.500px;top:424px;width:77px;height:43px;border-radius:22px;border:1.500px solid #525252;background:#141414;color:#b0b0b0;font-size:16px;line-height:39px;text-align:center;font-weight:500">压缩器</div><div class="knob" style="left:172px;top:489.500px;width:130px;height:130px;background:#1d1d1d;border-color:#4b4b4b"></div><div class="abs" style="left:234px;top:500.500px;width:6px;height:12.500px;border-radius:3px;background:#e8e8e8"></div><div class="ctr" style="left:237px;top:637px;font-size:14px;line-height:20px;font-weight:700">平衡</div><div class="ctr w" style="left:237px;top:665px;font-size:13px;line-height:18px;font-weight:700;color:#c2c2c2">0.00</div><div class="abs" style="left:387.500px;top:695px;width:76.500px;height:42.500px;border-radius:22px;border:1.500px solid #8e8e8e;font-size:16px;line-height:39px;text-align:center;font-weight:700">重置</div><div class="knob" style="left:159.800px;top:713.800px;width:153px;height:153px;background:#1d1d1d;border-color:#4b4b4b"></div><div class="abs" style="left:204px;top:835px;width:6px;height:12.500px;border-radius:3px;background:#e8e8e8;transform:rotate(30deg)"></div><div class="ctr" style="left:237px;top:884px;font-size:14px;line-height:20px;font-weight:700">音量</div><div class="ctr w" style="left:237px;top:912px;font-size:13px;line-height:18px;font-weight:700;color:#c2c2c2">0%</div>
<div class="bnav" style="background:#1b1b1b">
<svg width="454" height="62" viewBox="10 951 454 62" style="position:absolute;left:0;top:0">
<g fill="#a0a0a0">
<rect x="69.600" y="985.400" width="10.200" height="10.200" rx="3.400"/>
<rect x="82.500" y="967.500" width="10" height="28.100" rx="3.400"/>
<rect x="94.700" y="973.500" width="10" height="22.100" rx="3.400"/>
</g>
<circle cx="237" cy="982" r="15.800" fill="#ffffff"/>
<rect x="-3.900" y="-2.200" width="7.800" height="4.400" rx="2.200" fill="#111" transform="translate(231.500 976) rotate(42)"/>
<g fill="#a0a0a0">
<rect x="371.700" y="966.800" width="29.600" height="8.200" rx="3.800"/>
<rect x="371.700" y="977.400" width="29.600" height="8.200" rx="3.800"/>
<rect x="371.700" y="988" width="29.600" height="8.200" rx="3.800"/>
</g>
</svg>
</div></div><div class="abs" style="left:0;top:0;width:474px;height:1080px;background:rgba(0,0,0,.52)"></div>
<div class="sb">
<div class="time">16:31</div>
<svg width="474" height="50" viewBox="0 0 474 50">
<g fill="#e4e4e4">
<!-- hand icon -->
<path d="M69.3 29.2c0-1 .9-1.5 1.6-1.1v-2.3c0-1.300 1.900-1.300 1.900 0v1.500c.5-.7 1.700-.5 1.800.4c.6-.5 1.600-.2 1.700.6c.8-.3 1.700.2 1.700 1.100v2.600c0 1.800-1.300 3-3.200 3h-1.600c-2.100 0-3.900-1.600-3.900-3.700z"/>
<circle cx="90.800" cy="29.800" r="1.350"/><circle cx="96.200" cy="29.800" r="1.350"/><circle cx="101.600" cy="29.800" r="1.350"/>
</g>
<g fill="#000"><rect x="71.600" y="30.300" width="4.800" height="1" rx=".4"/><rect x="73.400" y="29" width="1" height="3.600" rx=".4"/></g>
<!-- mute bell -->
<g fill="none" stroke="#e4e4e4" stroke-width="1.500" stroke-linecap="round" stroke-linejoin="round">
<path d="M312 34.500h13.200c-1.700-1.400-2-2.700-2-5.300c0-3.400-1.700-5.500-4.600-5.500c-2.900 0-4.600 2.100-4.600 5.500c0 2.600-.3 3.900-2 5.300z"/>
<path d="M316.400 37.300h4.400"/>
<path d="M323.400 22.400L310.200 36" stroke-width="1.500"/>
</g>
<path d="M324.600 23.500L311.400 37.100" stroke="#000" stroke-width="1.300" fill="none"/>
<!-- signal -->
<g fill="#e4e4e4"><rect x="331.4" y="34.0" width="2.9" height="2.6" rx="0.6"/><rect x="335.9" y="31.6" width="2.9" height="5.0" rx="0.6"/><rect x="340.4" y="29.0" width="2.9" height="7.6" rx="0.6"/><rect x="344.9" y="26.3" width="2.9" height="10.3" rx="0.6"/><rect x="349.4" y="23.6" width="2.9" height="13.0" rx="0.6"/><rect x="357.9" y="34.0" width="2.9" height="2.6" rx="0.6"/><rect x="362.4" y="31.6" width="2.9" height="5.0" rx="0.6"/><rect x="366.9" y="29.0" width="2.9" height="7.6" rx="0.6"/><rect x="371.4" y="26.3" width="2.9" height="10.3" rx="0.6"/><rect x="375.9" y="23.6" width="2.9" height="13.0" rx="0.6"/></g>
<text x="329.600" y="28.300" font-family="Liberation Sans, sans-serif" font-size="6.400" font-weight="700" fill="#e4e4e4" textLength="10.400" lengthAdjust="spacingAndGlyphs">HD</text>
<!-- wifi -->
<g fill="none" stroke="#e4e4e4" stroke-width="2.250" stroke-linecap="round">
<path d="M385.400 27.800c5-4.800 12.200-4.800 17.200 0"/>
<path d="M388.400 31.200c3.300-3.100 7.900-3.100 11.200 0"/>
<path d="M391.200 34c1.700-1.500 3.900-1.500 5.600 0" stroke-width="1.900"/>
</g>
<circle cx="394" cy="36" r="1.300" fill="#e4e4e4"/>
<path d="M399.400 35.200l2-1.500v3zM402.300 37v-3.500l1.800 1.700z" fill="#cfcfcf"/>
<!-- battery -->
<rect x="411.500" y="24.300" width="27" height="11.400" rx="3" fill="none" stroke="#d8efc6" stroke-width="1.400"/>
<rect x="413.300" y="26.100" width="17.800" height="7.800" rx="1.400" fill="#55a22a"/>
<rect x="439.600" y="27.600" width="1.500" height="4.600" rx=".7" fill="#d8efc6"/>
<text x="418.600" y="33.900" font-family="Liberation Sans, sans-serif" font-size="10.400" font-weight="700" fill="#c9f3a3" textLength="12" lengthAdjust="spacingAndGlyphs">68</text>
<path d="M450.200 24.200l-5.400 6.600h3.100l-1.400 4.700l5.600-6.800h-3.200z" fill="#e4e4e4"/>
</svg>
</div><div class="abs" style="left:17px;top:433.500px;width:440px;height:200px;border-radius:28px 28px 34px 34px;background:#212121;overflow:hidden">
<div class="abs" style="left:0;top:131.500px;width:440px;height:68.500px;border-radius:34px;background:radial-gradient(ellipse 60% 130% at 50% 50%,#4d4d4d 0%,#444 45%,#343434 100%);box-shadow:0 -2px 5px rgba(0,0,0,.35)"></div>
<div class="ctr" style="left:220px;top:154.500px;font-size:17px;line-height:24px;font-weight:500;color:#fff">确定</div>
<svg class="abs" style="left:25px;top:27px" width="300" height="28" viewBox="0 0 300 28">
<g transform="translate(0 19) skewX(-11)" fill="#f4f4f4" stroke="#f4f4f4" stroke-width=".55" font-family="Liberation Sans, sans-serif" font-weight="700">
<text x="5.600" y="0" font-size="17.800" textLength="15.200" lengthAdjust="spacingAndGlyphs">P</text>
<text x="21.600" y="0" font-size="14" textLength="100.500" lengthAdjust="spacingAndGlyphs">OWERAMP</text>
<rect x="123.600" y="-4" width="4" height="4" fill="#8c8c8c" stroke="none"/>
<rect x="129.900" y="-11.800" width="4.100" height="11.800" fill="#9c9c9c" stroke="none"/><rect x="136.200" y="-11.800" width="4.100" height="11.800" fill="#9c9c9c" stroke="none"/>
<text x="143.800" y="0" font-size="17.800" textLength="139.500" lengthAdjust="spacingAndGlyphs">EQUALIZER</text>
</g></svg>
<svg class="abs" style="left:32px;top:77px" width="36" height="32" viewBox="0 0 36 32"><path d="M1.500 10.200l10.300 2.300l5.300 8.500L32.700 1.300L16.500 30.300z" fill="#fff"/></svg>
<div class="abs" style="left:87px;top:83.500px;font-size:16.500px;line-height:24px;font-weight:500;color:#fff;letter-spacing:.55px;white-space:nowrap">感谢您的购买<span style="margin-left:2px">!</span></div>
</div>
<svg class="sys" viewBox="0 0 474 30" width="474" height="30">
<g fill="none" stroke="#b4b4b4" stroke-width="1.900" stroke-linecap="round" stroke-linejoin="round">
<path d="M124.500 9h15M124.500 15h15M124.500 21h15"/>
<rect x="228.400" y="7.500" width="16.200" height="15.600" rx="3.600"/>
<path d="M346.500 7.500L337.200 15.200L346.500 23"/>
</g></svg>
</div>
</body>
</html>
